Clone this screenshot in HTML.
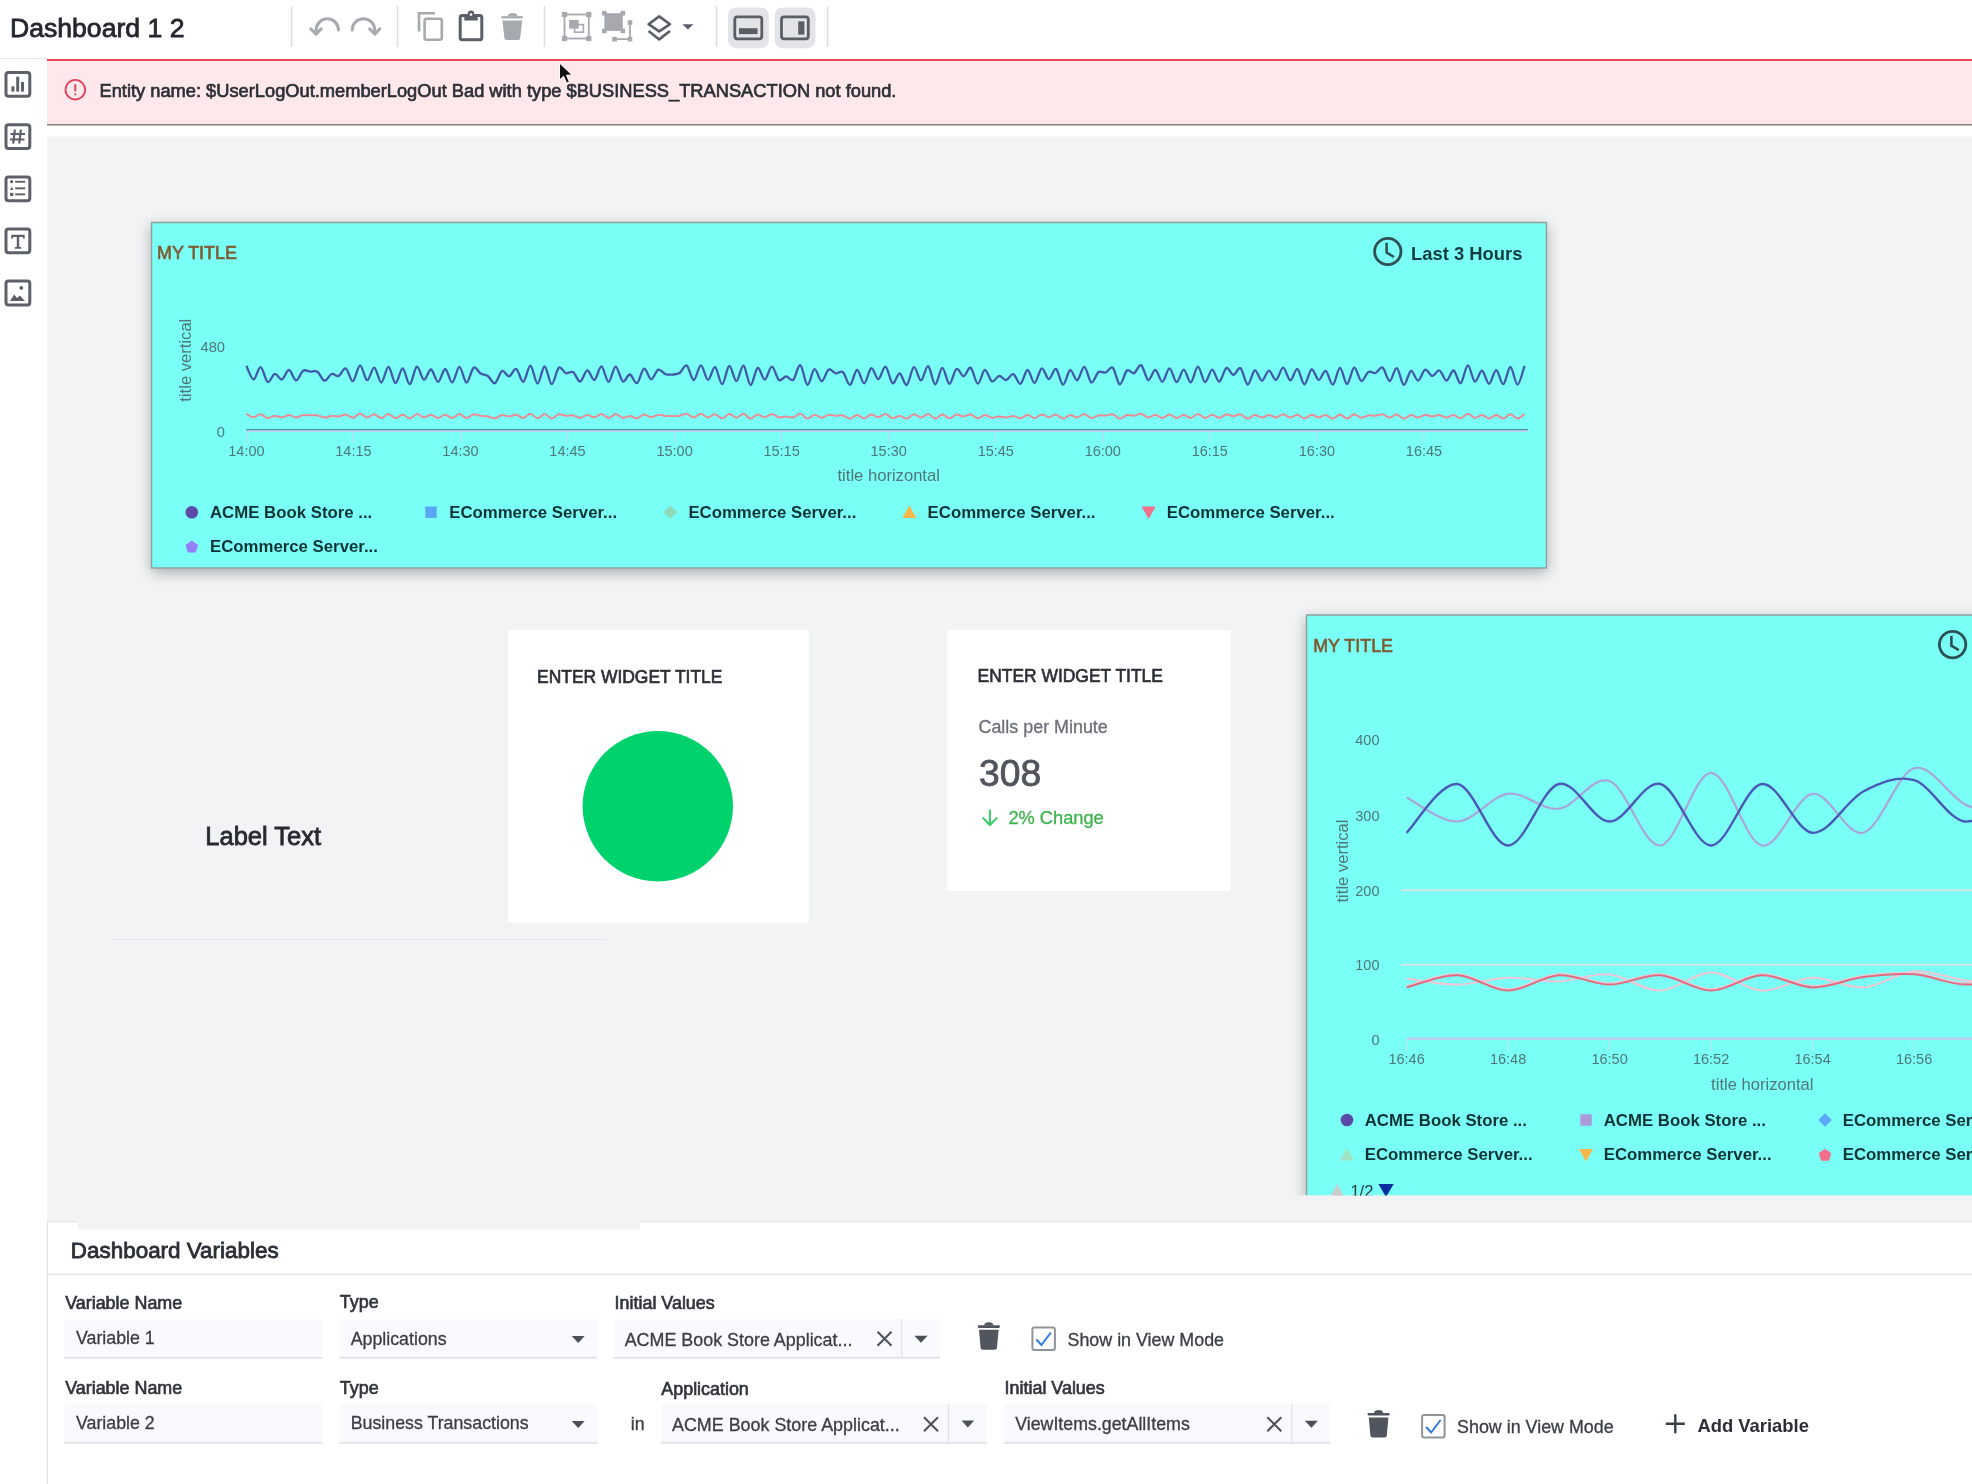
<!DOCTYPE html>
<html><head><meta charset="utf-8"><title>Dashboard</title>
<style>html,body{margin:0;padding:0;background:#fff;overflow:hidden;}svg{display:block;filter:blur(0.35px);}text{font-family:"Liberation Sans",sans-serif;white-space:pre;}</style>
</head><body>
<svg width="1972" height="1484" viewBox="0 0 1972 1484">
<defs><clipPath id="c2"><rect x="1280" y="590" width="700" height="605.6"/></clipPath><filter id="sh" x="-5%" y="-10%" width="110%" height="125%"><feGaussianBlur in="SourceAlpha" stdDeviation="7"/><feOffset dx="0" dy="4"/><feComponentTransfer><feFuncA type="linear" slope="0.3"/></feComponentTransfer><feMerge><feMergeNode/><feMergeNode in="SourceGraphic"/></feMerge></filter></defs>
<rect x="0" y="0" width="1972" height="1484" fill="#ffffff"/>
<rect x="47" y="136.5" width="1925" height="1085" fill="#f2f3f5"/>
<rect x="0" y="58" width="47" height="1" fill="#e6e7ea"/>
<rect x="47" y="59" width="1925" height="66" fill="#ffe8eb"/>
<rect x="47" y="59" width="1925" height="2" fill="#e8475c"/>
<rect x="47" y="124" width="1925" height="1.5" fill="#8c7c80"/>
<circle cx="75.3" cy="89.7" r="9.8" fill="none" stroke="#e2415a" stroke-width="1.8"/>
<rect x="74.3" y="84" width="2" height="7.5" rx="1" fill="#c94a5c"/>
<circle cx="75.3" cy="94.3" r="1.1" fill="#c94a5c"/>
<text x="99.5" y="96.6" font-size="18.28" fill="#2b2f36" stroke="#2b2f36" stroke-width="0.66" text-anchor="start" >Entity name: $UserLogOut.memberLogOut Bad with type $BUSINESS_TRANSACTION not found.</text>
<text x="10" y="37.3" font-size="26.6" fill="#24272e" stroke="#24272e" stroke-width="0.8" text-anchor="start" >Dashboard 1 2</text>
<rect x="290.85" y="6" width="1.5" height="41" fill="#dcdde0"/>
<rect x="396.75" y="6" width="1.5" height="41" fill="#dcdde0"/>
<rect x="543.65" y="6" width="1.5" height="41" fill="#dcdde0"/>
<rect x="715.75" y="6" width="1.5" height="41" fill="#dcdde0"/>
<rect x="826.85" y="6" width="1.5" height="41" fill="#dcdde0"/>
<path d="M338.5,30 A11.2,11.2 0 0 0 316.1,30 L316.1,33" fill="none" stroke="#a6a9ae" stroke-width="3" stroke-linecap="round"/>
<path d="M310.8,28.8 L316.1,34.2 L321.2,28.8" fill="none" stroke="#a6a9ae" stroke-width="3" stroke-linecap="round" stroke-linejoin="round"/>
<path d="M352.2,30 A11.2,11.2 0 0 1 374.8,30 L374.8,33" fill="none" stroke="#a6a9ae" stroke-width="3" stroke-linecap="round"/>
<path d="M369.6,28.8 L374.8,34.2 L379.8,28.8" fill="none" stroke="#a6a9ae" stroke-width="3" stroke-linecap="round" stroke-linejoin="round"/>
<path d="M419,31.5 L419,13.3 L435,13.3" fill="none" stroke="#a6a9ae" stroke-width="2.6"/>
<rect x="424.6" y="18.8" width="17.2" height="21" rx="2" fill="none" stroke="#a6a9ae" stroke-width="2.6"/>
<rect x="460.2" y="15.5" width="21.6" height="24.2" rx="2" fill="none" stroke="#5a5e66" stroke-width="3"/>
<rect x="464.3" y="14" width="13.4" height="6.5" fill="#5a5e66"/>
<circle cx="471" cy="13.6" r="3.2" fill="#5a5e66"/><circle cx="471" cy="14.6" r="1.3" fill="#fff"/>
<rect x="501.5" y="16.2" width="21.3" height="2.2" fill="#a6a9ae"/>
<path d="M507.8,16.5 Q507.8,13 512.6,13 Q517.4,13 517.4,16.5 Z" fill="#a6a9ae"/>
<path d="M502.4,20.5 L522.2,20.5 L520.2,38 Q520,40 518,40 L506.6,40 Q504.6,40 504.4,38 Z" fill="#a6a9ae"/>
<rect x="564.5" y="14.5" width="24.3" height="24" fill="none" stroke="#a6a9ae" stroke-width="1.8"/>
<rect x="561.9" y="11.9" width="5.2" height="5.2" fill="#a6a9ae"/>
<rect x="586.1999999999999" y="11.9" width="5.2" height="5.2" fill="#a6a9ae"/>
<rect x="561.9" y="35.9" width="5.2" height="5.2" fill="#a6a9ae"/>
<rect x="586.1999999999999" y="35.9" width="5.2" height="5.2" fill="#a6a9ae"/>
<rect x="574.6" y="24.6" width="8.8" height="7.6" fill="none" stroke="#a6a9ae" stroke-width="1.6"/>
<rect x="569.1" y="19.9" width="9.6" height="8.8" fill="#a6a9ae"/>
<rect x="604.4" y="13.2" width="18.4" height="17.7" fill="#a6a9ae"/>
<rect x="602.1" y="10.899999999999999" width="4.6" height="4.6" fill="#a6a9ae"/>
<rect x="620.5" y="10.899999999999999" width="4.6" height="4.6" fill="#a6a9ae"/>
<rect x="602.1" y="28.599999999999998" width="4.6" height="4.6" fill="#a6a9ae"/>
<rect x="620.5" y="28.599999999999998" width="4.6" height="4.6" fill="#a6a9ae"/>
<path d="M630,22.5 L630,39.2 L614.5,39.2" fill="none" stroke="#a6a9ae" stroke-width="1.8"/>
<rect x="627.7" y="20.2" width="4.6" height="4.6" fill="#a6a9ae"/>
<rect x="612.2" y="36.900000000000006" width="4.6" height="4.6" fill="#a6a9ae"/>
<rect x="627.7" y="36.900000000000006" width="4.6" height="4.6" fill="#a6a9ae"/>
<path d="M659.2,16.4 L670,24.2 L659.2,31.4 L648.6,24.2 Z" fill="none" stroke="#5a5e66" stroke-width="2.6" stroke-linejoin="round"/>
<path d="M648.6,31 L659.2,39.4 L670,31" fill="none" stroke="#5a5e66" stroke-width="2.6" stroke-linejoin="round"/>
<path d="M682.4,24.3 L693.4,24.3 L687.9,29.6 Z" fill="#5a5e66"/>
<rect x="728" y="7.4" width="40.8" height="40.8" rx="8" fill="#e3e4e7"/>
<rect x="774.7" y="7.4" width="40.8" height="40.8" rx="8" fill="#e3e4e7"/>
<rect x="734.8" y="16.8" width="27" height="22" rx="2.5" fill="none" stroke="#5a5e66" stroke-width="2.8"/>
<rect x="739" y="28.2" width="18.6" height="5.9" fill="#5a5e66"/>
<rect x="781.5" y="16.8" width="26.8" height="22" rx="2.5" fill="none" stroke="#5a5e66" stroke-width="2.8"/>
<rect x="798.2" y="21.3" width="6.2" height="13.3" fill="#5a5e66"/>
<rect x="6" y="72.5" width="23.8" height="23.8" rx="2.5" fill="none" stroke="#5c6068" stroke-width="3"/>
<rect x="6" y="124.7" width="23.8" height="23.8" rx="2.5" fill="none" stroke="#5c6068" stroke-width="3"/>
<rect x="6" y="176.9" width="23.8" height="23.8" rx="2.5" fill="none" stroke="#5c6068" stroke-width="3"/>
<rect x="6" y="229.0" width="23.8" height="23.8" rx="2.5" fill="none" stroke="#5c6068" stroke-width="3"/>
<rect x="6" y="281.1" width="23.8" height="23.8" rx="2.5" fill="none" stroke="#5c6068" stroke-width="3"/>
<rect x="11.4" y="86.3" width="3" height="5.3" fill="#5c6068"/><rect x="16.2" y="76.7" width="3" height="14.9" fill="#5c6068"/><rect x="21" y="81.9" width="3" height="9.7" fill="#5c6068"/>
<path d="M14.9,129.7 L13.2,143.7 M20.9,129.7 L19.2,143.7 M10.5,134.0 L25,134.0 M10,139.5 L24.5,139.5" stroke="#5c6068" stroke-width="2.2" fill="none"/>
<circle cx="11.6" cy="181.70000000000002" r="1.6" fill="#5c6068"/><path d="M10,190.0 L11.7,186.8 L13.4,190.0 Z" fill="#5c6068"/><rect x="10.1" y="192.9" width="3.2" height="3.2" fill="#5c6068"/>
<rect x="15.2" y="180.8" width="10" height="1.9" fill="#5c6068"/><rect x="15.2" y="187.4" width="10" height="1.9" fill="#5c6068"/><rect x="15.2" y="193.4" width="10" height="1.9" fill="#5c6068"/>
<path d="M11.3,234.8 L24.7,234.8 L24.7,238.7 L23.3,238.7 L22.8,236.9 L19.2,236.9 L19.2,246.8 L21.2,247.3 L21.2,248.7 L14.8,248.7 L14.8,247.3 L16.8,246.8 L16.8,236.9 L13.2,236.9 L12.7,238.7 L11.3,238.7 Z" fill="#5c6068"/>
<circle cx="21.3" cy="287.90000000000003" r="1.9" fill="#5c6068"/><path d="M10,300.90000000000003 L14.2,294.6 L17,298.1 L19.8,295.40000000000003 L25,300.90000000000003 Z" fill="#5c6068"/>
<path d="M559.5,63 L559.5,80 L563.6,76.3 L566.6,83.2 L569.4,82 L566.5,75.2 L572,75 Z" fill="#111" stroke="#fff" stroke-width="1"/>
<rect x="151.5" y="222.5" width="1395" height="345.5" fill="#79fff6" stroke="#8e9e9e" stroke-width="1.5" filter="url(#sh)"/>
<text x="157" y="259" font-size="17.9" fill="#7e5b32" stroke="#7e5b32" stroke-width="0.64" text-anchor="start" >MY TITLE</text>
<circle cx="1387.8" cy="251.5" r="13.2" fill="none" stroke="#2e5052" stroke-width="2.8"/>
<path d="M1386.6,242.8 L1386.6,252.6 L1394,257" fill="none" stroke="#2e5052" stroke-width="2.6"/>
<text x="1411" y="259.7" font-size="18.4" fill="#143b3d" font-weight="bold" text-anchor="start" >Last 3 Hours</text>
<text transform="translate(191.2,360.2) rotate(-90)" font-size="16.6" fill="#4e7777" text-anchor="middle">title vertical</text>
<text x="225" y="351.7" font-size="14.7" fill="#4e7777" font-weight="normal" text-anchor="end" >480</text>
<text x="225" y="437" font-size="14.7" fill="#4e7777" font-weight="normal" text-anchor="end" >0</text>
<rect x="245.9" y="430" width="1" height="13" fill="#c6d2f2"/>
<text x="246.4" y="456.2" font-size="14.5" fill="#4e7777" font-weight="normal" text-anchor="middle" >14:00</text>
<rect x="352.95" y="430" width="1" height="13" fill="#c6d2f2"/>
<text x="353.4" y="456.2" font-size="14.5" fill="#4e7777" font-weight="normal" text-anchor="middle" >14:15</text>
<rect x="460.0" y="430" width="1" height="13" fill="#c6d2f2"/>
<text x="460.5" y="456.2" font-size="14.5" fill="#4e7777" font-weight="normal" text-anchor="middle" >14:30</text>
<rect x="567.05" y="430" width="1" height="13" fill="#c6d2f2"/>
<text x="567.5" y="456.2" font-size="14.5" fill="#4e7777" font-weight="normal" text-anchor="middle" >14:45</text>
<rect x="674.1" y="430" width="1" height="13" fill="#c6d2f2"/>
<text x="674.6" y="456.2" font-size="14.5" fill="#4e7777" font-weight="normal" text-anchor="middle" >15:00</text>
<rect x="781.15" y="430" width="1" height="13" fill="#c6d2f2"/>
<text x="781.6" y="456.2" font-size="14.5" fill="#4e7777" font-weight="normal" text-anchor="middle" >15:15</text>
<rect x="888.1999999999999" y="430" width="1" height="13" fill="#c6d2f2"/>
<text x="888.7" y="456.2" font-size="14.5" fill="#4e7777" font-weight="normal" text-anchor="middle" >15:30</text>
<rect x="995.25" y="430" width="1" height="13" fill="#c6d2f2"/>
<text x="995.8" y="456.2" font-size="14.5" fill="#4e7777" font-weight="normal" text-anchor="middle" >15:45</text>
<rect x="1102.3" y="430" width="1" height="13" fill="#c6d2f2"/>
<text x="1102.8" y="456.2" font-size="14.5" fill="#4e7777" font-weight="normal" text-anchor="middle" >16:00</text>
<rect x="1209.35" y="430" width="1" height="13" fill="#c6d2f2"/>
<text x="1209.8" y="456.2" font-size="14.5" fill="#4e7777" font-weight="normal" text-anchor="middle" >16:15</text>
<rect x="1316.4" y="430" width="1" height="13" fill="#c6d2f2"/>
<text x="1316.9" y="456.2" font-size="14.5" fill="#4e7777" font-weight="normal" text-anchor="middle" >16:30</text>
<rect x="1423.45" y="430" width="1" height="13" fill="#c6d2f2"/>
<text x="1424.0" y="456.2" font-size="14.5" fill="#4e7777" font-weight="normal" text-anchor="middle" >16:45</text>
<rect x="246" y="430" width="1282" height="2" fill="#c6d2f2"/>
<rect x="246" y="429" width="1282" height="1.3" fill="#3f9b9e"/>
<text x="888.7" y="480.6" font-size="16.6" fill="#4e7777" font-weight="normal" text-anchor="middle" >title horizontal</text>
<path d="M246.4,413.7 C247.6,414.2 251.1,417.1 253.5,417.1 C255.9,417.2 258.2,413.9 260.6,414.0 C263.0,414.1 265.3,417.5 267.7,417.8 C270.1,418.1 272.4,415.8 274.8,415.7 C277.2,415.6 279.5,417.3 281.9,417.1 C284.3,417.0 286.6,414.7 289.0,414.7 C291.4,414.7 293.7,417.3 296.1,417.3 C298.5,417.4 300.8,415.2 303.2,414.9 C305.6,414.5 307.9,415.1 310.3,415.1 C312.7,415.2 315.0,414.7 317.4,415.1 C319.8,415.5 322.1,417.3 324.5,417.4 C326.9,417.5 329.2,415.9 331.6,415.7 C334.0,415.5 336.3,416.4 338.7,416.2 C341.1,416.0 343.4,414.1 345.8,414.3 C348.2,414.5 350.5,417.7 352.9,417.6 C355.3,417.4 357.7,413.6 360.0,413.5 C362.4,413.5 364.8,417.2 367.1,417.3 C369.5,417.4 371.9,414.0 374.2,414.1 C376.6,414.2 379.0,417.9 381.3,417.9 C383.7,417.9 386.1,413.9 388.4,413.9 C390.8,413.9 393.2,418.0 395.5,418.1 C397.9,418.1 400.3,414.3 402.6,414.3 C405.0,414.3 407.4,418.4 409.7,418.3 C412.1,418.3 414.5,414.1 416.8,413.9 C419.2,413.7 421.6,417.1 423.9,417.2 C426.3,417.3 428.7,414.5 431.0,414.6 C433.4,414.7 435.8,417.8 438.1,417.7 C440.5,417.7 442.9,414.4 445.2,414.4 C447.6,414.5 450.0,418.0 452.3,417.9 C454.7,417.8 457.1,413.9 459.4,413.9 C461.8,413.9 464.2,417.9 466.5,417.9 C468.9,417.9 471.3,414.5 473.6,414.1 C476.0,413.7 478.4,415.2 480.7,415.6 C483.1,415.9 485.5,415.8 487.8,416.2 C490.2,416.6 492.6,418.3 494.9,418.1 C497.3,417.9 499.7,415.2 502.0,414.9 C504.4,414.7 506.8,416.4 509.1,416.3 C511.5,416.2 513.9,414.2 516.2,414.4 C518.6,414.7 521.0,417.8 523.3,417.7 C525.7,417.6 528.1,413.5 530.4,413.6 C532.8,413.7 535.2,418.1 537.5,418.2 C539.9,418.2 542.3,413.8 544.6,413.8 C547.0,413.8 549.4,418.3 551.7,418.3 C554.1,418.4 556.5,414.6 558.8,414.1 C561.2,413.6 563.6,415.3 565.9,415.5 C568.3,415.7 570.7,414.9 573.1,415.2 C575.4,415.6 577.8,417.7 580.2,417.6 C582.5,417.6 584.9,414.8 587.3,414.8 C589.6,414.7 592.0,417.4 594.4,417.2 C596.7,417.1 599.1,413.7 601.5,413.8 C603.8,413.9 606.2,417.7 608.6,417.7 C610.9,417.7 613.3,413.8 615.7,413.8 C618.0,413.8 620.4,417.3 622.8,417.6 C625.1,418.0 627.5,415.8 629.9,415.9 C632.2,415.9 634.6,418.3 637.0,418.1 C639.3,417.8 641.7,414.5 644.1,414.4 C646.4,414.2 648.8,417.0 651.2,417.1 C653.5,417.1 655.9,414.8 658.3,414.6 C660.6,414.4 663.0,415.5 665.4,415.7 C667.7,415.9 670.1,415.9 672.5,415.9 C674.8,415.8 677.2,415.9 679.6,415.5 C681.9,415.1 684.3,413.2 686.7,413.5 C689.0,413.8 691.4,417.2 693.8,417.2 C696.1,417.2 698.5,413.5 700.9,413.5 C703.2,413.5 705.6,417.1 708.0,417.2 C710.3,417.3 712.7,413.8 715.1,414.0 C717.4,414.2 719.8,418.4 722.2,418.3 C724.5,418.3 726.9,413.8 729.3,413.7 C731.6,413.5 734.0,417.5 736.4,417.5 C738.7,417.5 741.1,413.4 743.5,413.6 C745.8,413.8 748.2,418.4 750.6,418.5 C752.9,418.6 755.3,414.4 757.7,414.2 C760.0,413.9 762.4,417.2 764.8,417.2 C767.1,417.1 769.5,413.8 771.9,413.8 C774.2,413.8 776.6,416.8 779.0,417.2 C781.4,417.7 783.7,416.3 786.1,416.3 C788.5,416.3 790.8,417.7 793.2,417.2 C795.6,416.7 797.9,413.3 800.3,413.5 C802.7,413.7 805.0,418.3 807.4,418.5 C809.8,418.7 812.1,414.6 814.5,414.5 C816.9,414.3 819.2,417.5 821.6,417.6 C824.0,417.6 826.3,414.9 828.7,414.6 C831.1,414.3 833.4,415.5 835.8,415.6 C838.2,415.7 840.5,414.7 842.9,415.2 C845.3,415.7 847.6,418.6 850.0,418.5 C852.4,418.4 854.7,414.7 857.1,414.7 C859.5,414.6 861.8,418.2 864.2,418.1 C866.6,418.1 868.9,414.4 871.3,414.2 C873.7,414.0 876.0,417.1 878.4,417.0 C880.8,417.0 883.1,413.7 885.5,413.9 C887.9,414.0 890.2,417.8 892.6,418.1 C895.0,418.3 897.3,415.5 899.7,415.6 C902.1,415.7 904.4,418.8 906.8,418.5 C909.2,418.2 911.5,414.2 913.9,414.0 C916.3,413.8 918.6,417.4 921.0,417.3 C923.4,417.3 925.7,413.6 928.1,413.7 C930.5,413.9 932.8,418.3 935.2,418.4 C937.6,418.4 939.9,414.2 942.3,414.2 C944.7,414.1 947.0,418.2 949.4,418.2 C951.8,418.3 954.1,414.8 956.5,414.4 C958.9,414.1 961.2,416.3 963.6,416.3 C966.0,416.2 968.3,413.8 970.7,414.2 C973.1,414.5 975.4,418.1 977.8,418.2 C980.2,418.3 982.5,414.8 984.9,414.7 C987.3,414.5 989.6,417.3 992.0,417.6 C994.4,417.9 996.8,416.3 999.1,416.2 C1001.5,416.2 1003.9,417.3 1006.2,417.3 C1008.6,417.2 1011.0,415.6 1013.3,415.7 C1015.7,415.9 1018.1,418.4 1020.4,418.2 C1022.8,418.1 1025.2,414.7 1027.5,414.7 C1029.9,414.7 1032.3,418.1 1034.6,418.0 C1037.0,417.9 1039.4,414.4 1041.7,414.3 C1044.1,414.1 1046.5,417.0 1048.8,417.0 C1051.2,417.0 1053.6,414.2 1055.9,414.4 C1058.3,414.7 1060.7,418.4 1063.0,418.4 C1065.4,418.5 1067.8,414.9 1070.1,414.8 C1072.5,414.6 1074.9,417.5 1077.2,417.3 C1079.6,417.2 1082.0,413.8 1084.3,413.9 C1086.7,414.0 1089.1,417.7 1091.4,417.9 C1093.8,418.1 1096.2,415.6 1098.5,415.2 C1100.9,414.8 1103.3,415.5 1105.6,415.3 C1108.0,415.2 1110.4,413.6 1112.7,414.1 C1115.1,414.6 1117.5,418.3 1119.8,418.4 C1122.2,418.5 1124.6,415.3 1126.9,414.8 C1129.3,414.4 1131.7,415.8 1134.0,415.5 C1136.4,415.3 1138.8,413.2 1141.1,413.5 C1143.5,413.7 1145.9,417.1 1148.2,417.3 C1150.6,417.5 1153.0,414.6 1155.3,414.6 C1157.7,414.7 1160.1,417.8 1162.4,417.7 C1164.8,417.7 1167.2,414.3 1169.5,414.3 C1171.9,414.3 1174.3,417.7 1176.6,417.8 C1179.0,417.8 1181.4,414.6 1183.7,414.6 C1186.1,414.6 1188.5,418.0 1190.8,417.9 C1193.2,417.7 1195.6,413.9 1197.9,413.8 C1200.3,413.8 1202.7,417.6 1205.0,417.8 C1207.4,417.9 1209.8,414.6 1212.2,414.6 C1214.5,414.6 1216.9,417.7 1219.3,417.7 C1221.6,417.6 1224.0,414.5 1226.4,414.2 C1228.7,413.9 1231.1,415.9 1233.5,415.9 C1235.8,415.9 1238.2,413.8 1240.6,414.2 C1242.9,414.7 1245.3,418.3 1247.7,418.4 C1250.0,418.5 1252.4,414.9 1254.8,414.8 C1257.1,414.6 1259.5,417.4 1261.9,417.4 C1264.2,417.4 1266.6,414.9 1269.0,414.9 C1271.3,414.8 1273.7,417.3 1276.1,417.2 C1278.4,417.1 1280.8,414.1 1283.2,414.1 C1285.5,414.1 1287.9,417.3 1290.3,417.4 C1292.6,417.4 1295.0,414.3 1297.4,414.4 C1299.7,414.6 1302.1,418.4 1304.5,418.4 C1306.8,418.4 1309.2,414.7 1311.6,414.5 C1313.9,414.3 1316.3,417.1 1318.7,417.2 C1321.0,417.3 1323.4,414.7 1325.8,414.9 C1328.1,415.1 1330.5,418.6 1332.9,418.5 C1335.2,418.3 1337.6,414.2 1340.0,414.2 C1342.3,414.1 1344.7,418.3 1347.1,418.3 C1349.4,418.3 1351.8,414.2 1354.2,414.1 C1356.5,414.0 1358.9,417.3 1361.3,417.5 C1363.6,417.7 1366.0,415.5 1368.4,415.2 C1370.7,414.8 1373.1,415.6 1375.5,415.5 C1377.8,415.3 1380.2,413.8 1382.6,414.1 C1384.9,414.4 1387.3,417.5 1389.7,417.5 C1392.0,417.5 1394.4,414.0 1396.8,414.2 C1399.1,414.4 1401.5,418.4 1403.9,418.5 C1406.2,418.6 1408.6,415.1 1411.0,414.9 C1413.3,414.7 1415.7,417.5 1418.1,417.4 C1420.5,417.4 1422.8,414.8 1425.2,414.6 C1427.6,414.4 1429.9,416.2 1432.3,416.2 C1434.7,416.3 1437.0,414.6 1439.4,414.8 C1441.8,415.0 1444.1,417.4 1446.5,417.4 C1448.9,417.4 1451.2,414.7 1453.6,414.8 C1456.0,414.9 1458.3,418.3 1460.7,418.1 C1463.1,417.8 1465.4,413.6 1467.8,413.5 C1470.2,413.4 1472.5,417.4 1474.9,417.6 C1477.3,417.9 1479.6,414.8 1482.0,414.9 C1484.4,415.0 1486.7,418.2 1489.1,418.2 C1491.5,418.2 1493.8,414.7 1496.2,414.7 C1498.6,414.8 1500.9,418.4 1503.3,418.3 C1505.7,418.2 1508.0,413.9 1510.4,413.9 C1512.8,414.0 1515.1,418.5 1517.5,418.4 C1519.9,418.4 1523.4,414.4 1524.6,413.6" fill="none" stroke="#b9a48a" stroke-width="1.6" opacity="0.7"/>
<path d="M246.4,414.0 C247.6,414.5 251.1,417.3 253.5,417.4 C255.9,417.4 258.2,414.2 260.6,414.3 C263.0,414.4 265.3,417.7 267.7,418.0 C270.1,418.3 272.4,416.1 274.8,416.0 C277.2,415.8 279.5,417.5 281.9,417.4 C284.3,417.2 286.6,415.0 289.0,415.0 C291.4,415.0 293.7,417.6 296.1,417.6 C298.5,417.6 300.8,415.5 303.2,415.2 C305.6,414.8 307.9,415.4 310.3,415.4 C312.7,415.4 315.0,415.0 317.4,415.4 C319.8,415.8 322.1,417.6 324.5,417.7 C326.9,417.8 329.2,416.2 331.6,416.0 C334.0,415.8 336.3,416.7 338.7,416.5 C341.1,416.3 343.4,414.4 345.8,414.6 C348.2,414.8 350.5,417.9 352.9,417.8 C355.3,417.7 357.7,413.9 360.0,413.8 C362.4,413.8 364.8,417.5 367.1,417.6 C369.5,417.7 371.9,414.3 374.2,414.4 C376.6,414.5 379.0,418.2 381.3,418.1 C383.7,418.1 386.1,414.2 388.4,414.2 C390.8,414.2 393.2,418.2 395.5,418.3 C397.9,418.4 400.3,414.6 402.6,414.6 C405.0,414.7 407.4,418.6 409.7,418.6 C412.1,418.5 414.5,414.4 416.8,414.2 C419.2,414.0 421.6,417.3 423.9,417.4 C426.3,417.5 428.7,414.8 431.0,414.9 C433.4,415.0 435.8,418.0 438.1,418.0 C440.5,418.0 442.9,414.7 445.2,414.8 C447.6,414.8 450.0,418.2 452.3,418.1 C454.7,418.0 457.1,414.2 459.4,414.2 C461.8,414.2 464.2,418.1 466.5,418.1 C468.9,418.2 471.3,414.8 473.6,414.4 C476.0,414.1 478.4,415.5 480.7,415.9 C483.1,416.2 485.5,416.1 487.8,416.5 C490.2,416.9 492.6,418.5 494.9,418.3 C497.3,418.1 499.7,415.5 502.0,415.2 C504.4,415.0 506.8,416.7 509.1,416.6 C511.5,416.5 513.9,414.5 516.2,414.8 C518.6,415.0 521.0,418.1 523.3,417.9 C525.7,417.8 528.1,413.8 530.4,413.9 C532.8,414.0 535.2,418.4 537.5,418.4 C539.9,418.4 542.3,414.1 544.6,414.1 C547.0,414.1 549.4,418.5 551.7,418.6 C554.1,418.6 556.5,414.9 558.8,414.4 C561.2,414.0 563.6,415.6 565.9,415.8 C568.3,416.0 570.7,415.2 573.1,415.5 C575.4,415.9 577.8,417.9 580.2,417.9 C582.5,417.8 584.9,415.1 587.3,415.1 C589.6,415.0 592.0,417.6 594.4,417.5 C596.7,417.3 599.1,414.0 601.5,414.1 C603.8,414.2 606.2,418.0 608.6,418.0 C610.9,418.0 613.3,414.2 615.7,414.1 C618.0,414.1 620.4,417.5 622.8,417.9 C625.1,418.2 627.5,416.1 629.9,416.1 C632.2,416.2 634.6,418.5 637.0,418.3 C639.3,418.0 641.7,414.8 644.1,414.7 C646.4,414.5 648.8,417.3 651.2,417.3 C653.5,417.4 655.9,415.1 658.3,414.9 C660.6,414.7 663.0,415.8 665.4,416.0 C667.7,416.2 670.1,416.2 672.5,416.1 C674.8,416.1 677.2,416.2 679.6,415.8 C681.9,415.4 684.3,413.6 686.7,413.9 C689.0,414.1 691.4,417.5 693.8,417.5 C696.1,417.5 698.5,413.8 700.9,413.8 C703.2,413.8 705.6,417.4 708.0,417.5 C710.3,417.6 712.7,414.1 715.1,414.3 C717.4,414.5 719.8,418.6 722.2,418.6 C724.5,418.5 726.9,414.1 729.3,414.0 C731.6,413.8 734.0,417.8 736.4,417.8 C738.7,417.8 741.1,413.8 743.5,413.9 C745.8,414.1 748.2,418.6 750.6,418.7 C752.9,418.8 755.3,414.7 757.7,414.5 C760.0,414.3 762.4,417.5 764.8,417.4 C767.1,417.3 769.5,414.1 771.9,414.1 C774.2,414.2 776.6,417.1 779.0,417.5 C781.4,417.9 783.7,416.6 786.1,416.6 C788.5,416.6 790.8,417.9 793.2,417.5 C795.6,417.0 797.9,413.6 800.3,413.8 C802.7,414.0 805.0,418.6 807.4,418.7 C809.8,418.9 812.1,414.9 814.5,414.8 C816.9,414.6 819.2,417.8 821.6,417.8 C824.0,417.8 826.3,415.2 828.7,414.9 C831.1,414.6 833.4,415.7 835.8,415.8 C838.2,415.9 840.5,415.0 842.9,415.5 C845.3,416.0 847.6,418.8 850.0,418.7 C852.4,418.6 854.7,415.0 857.1,415.0 C859.5,414.9 861.8,418.4 864.2,418.4 C866.6,418.3 868.9,414.7 871.3,414.5 C873.7,414.3 876.0,417.4 878.4,417.3 C880.8,417.2 883.1,414.0 885.5,414.2 C887.9,414.3 890.2,418.0 892.6,418.3 C895.0,418.6 897.3,415.8 899.7,415.9 C902.1,416.0 904.4,419.0 906.8,418.7 C909.2,418.5 911.5,414.5 913.9,414.3 C916.3,414.1 918.6,417.6 921.0,417.6 C923.4,417.6 925.7,413.9 928.1,414.1 C930.5,414.2 932.8,418.5 935.2,418.6 C937.6,418.7 939.9,414.5 942.3,414.5 C944.7,414.4 947.0,418.4 949.4,418.4 C951.8,418.5 954.1,415.1 956.5,414.7 C958.9,414.4 961.2,416.6 963.6,416.5 C966.0,416.5 968.3,414.2 970.7,414.5 C973.1,414.8 975.4,418.4 977.8,418.4 C980.2,418.5 982.5,415.0 984.9,415.0 C987.3,414.9 989.6,417.6 992.0,417.8 C994.4,418.1 996.8,416.5 999.1,416.5 C1001.5,416.4 1003.9,417.6 1006.2,417.5 C1008.6,417.4 1011.0,415.9 1013.3,416.0 C1015.7,416.2 1018.1,418.6 1020.4,418.5 C1022.8,418.3 1025.2,415.0 1027.5,415.0 C1029.9,415.0 1032.3,418.3 1034.6,418.2 C1037.0,418.2 1039.4,414.7 1041.7,414.6 C1044.1,414.4 1046.5,417.2 1048.8,417.3 C1051.2,417.3 1053.6,414.5 1055.9,414.7 C1058.3,415.0 1060.7,418.6 1063.0,418.7 C1065.4,418.7 1067.8,415.2 1070.1,415.1 C1072.5,414.9 1074.9,417.7 1077.2,417.6 C1079.6,417.4 1082.0,414.1 1084.3,414.2 C1086.7,414.3 1089.1,417.9 1091.4,418.1 C1093.8,418.3 1096.2,415.9 1098.5,415.5 C1100.9,415.1 1103.3,415.8 1105.6,415.6 C1108.0,415.5 1110.4,413.9 1112.7,414.4 C1115.1,414.9 1117.5,418.5 1119.8,418.6 C1122.2,418.7 1124.6,415.6 1126.9,415.1 C1129.3,414.7 1131.7,416.0 1134.0,415.8 C1136.4,415.6 1138.8,413.5 1141.1,413.8 C1143.5,414.1 1145.9,417.3 1148.2,417.5 C1150.6,417.7 1153.0,414.9 1155.3,414.9 C1157.7,415.0 1160.1,418.0 1162.4,418.0 C1164.8,417.9 1167.2,414.6 1169.5,414.6 C1171.9,414.6 1174.3,418.0 1176.6,418.0 C1179.0,418.1 1181.4,414.9 1183.7,414.9 C1186.1,414.9 1188.5,418.2 1190.8,418.1 C1193.2,418.0 1195.6,414.2 1197.9,414.2 C1200.3,414.2 1202.7,417.9 1205.0,418.0 C1207.4,418.1 1209.8,414.9 1212.2,414.9 C1214.5,414.9 1216.9,418.0 1219.3,417.9 C1221.6,417.9 1224.0,414.8 1226.4,414.5 C1228.7,414.2 1231.1,416.2 1233.5,416.2 C1235.8,416.2 1238.2,414.1 1240.6,414.5 C1242.9,415.0 1245.3,418.6 1247.7,418.7 C1250.0,418.7 1252.4,415.2 1254.8,415.1 C1257.1,414.9 1259.5,417.6 1261.9,417.6 C1264.2,417.7 1266.6,415.2 1269.0,415.2 C1271.3,415.1 1273.7,417.6 1276.1,417.5 C1278.4,417.3 1280.8,414.4 1283.2,414.4 C1285.5,414.4 1287.9,417.6 1290.3,417.6 C1292.6,417.7 1295.0,414.6 1297.4,414.8 C1299.7,414.9 1302.1,418.6 1304.5,418.6 C1306.8,418.6 1309.2,415.0 1311.6,414.8 C1313.9,414.6 1316.3,417.4 1318.7,417.5 C1321.0,417.5 1323.4,415.0 1325.8,415.2 C1328.1,415.4 1330.5,418.8 1332.9,418.7 C1335.2,418.6 1337.6,414.5 1340.0,414.5 C1342.3,414.5 1344.7,418.5 1347.1,418.5 C1349.4,418.5 1351.8,414.5 1354.2,414.4 C1356.5,414.3 1358.9,417.6 1361.3,417.8 C1363.6,417.9 1366.0,415.8 1368.4,415.5 C1370.7,415.1 1373.1,415.9 1375.5,415.8 C1377.8,415.6 1380.2,414.1 1382.6,414.4 C1384.9,414.7 1387.3,417.7 1389.7,417.7 C1392.0,417.8 1394.4,414.4 1396.8,414.5 C1399.1,414.7 1401.5,418.6 1403.9,418.7 C1406.2,418.8 1408.6,415.4 1411.0,415.2 C1413.3,415.0 1415.7,417.7 1418.1,417.6 C1420.5,417.6 1422.8,415.1 1425.2,414.9 C1427.6,414.7 1429.9,416.5 1432.3,416.5 C1434.7,416.5 1437.0,414.9 1439.4,415.1 C1441.8,415.3 1444.1,417.6 1446.5,417.6 C1448.9,417.6 1451.2,415.0 1453.6,415.1 C1456.0,415.2 1458.3,418.5 1460.7,418.3 C1463.1,418.1 1465.4,413.9 1467.8,413.8 C1470.2,413.8 1472.5,417.7 1474.9,417.9 C1477.3,418.1 1479.6,415.1 1482.0,415.2 C1484.4,415.3 1486.7,418.5 1489.1,418.5 C1491.5,418.4 1493.8,415.0 1496.2,415.0 C1498.6,415.0 1500.9,418.7 1503.3,418.5 C1505.7,418.4 1508.0,414.2 1510.4,414.3 C1512.8,414.3 1515.1,418.7 1517.5,418.6 C1519.9,418.6 1523.4,414.7 1524.6,413.9" fill="none" stroke="#f08a98" stroke-width="1.8"/>
<path d="M246.4,365.9 C247.6,368.2 251.1,379.2 253.5,379.4 C255.9,379.6 258.2,366.8 260.6,367.2 C263.0,367.6 265.3,380.9 267.7,382.0 C270.1,383.1 272.4,374.2 274.8,373.8 C277.2,373.4 279.5,380.2 281.9,379.5 C284.3,378.9 286.6,369.8 289.0,370.0 C291.4,370.1 293.7,380.2 296.1,380.3 C298.5,380.5 300.8,372.1 303.2,370.7 C305.6,369.2 307.9,371.4 310.3,371.6 C312.7,371.8 315.0,370.2 317.4,371.7 C319.8,373.2 322.1,380.4 324.5,380.7 C326.9,381.1 329.2,374.8 331.6,374.0 C334.0,373.2 336.3,376.9 338.7,375.9 C341.1,375.0 343.4,367.6 345.8,368.5 C348.2,369.4 350.5,381.8 352.9,381.2 C355.3,380.7 357.7,365.5 360.0,365.4 C362.4,365.2 364.8,379.9 367.1,380.2 C369.5,380.6 371.9,367.2 374.2,367.6 C376.6,367.9 379.0,382.6 381.3,382.5 C383.7,382.4 386.1,366.7 388.4,366.8 C390.8,366.9 393.2,382.9 395.5,383.2 C397.9,383.5 400.3,368.3 402.6,368.4 C405.0,368.6 407.4,384.5 409.7,384.3 C412.1,384.0 414.5,367.5 416.8,366.7 C419.2,366.0 421.6,379.2 423.9,379.7 C426.3,380.2 428.7,369.2 431.0,369.5 C433.4,369.9 435.8,382.0 438.1,381.9 C440.5,381.8 442.9,368.9 445.2,369.0 C447.6,369.1 450.0,382.8 452.3,382.4 C454.7,382.1 457.1,366.9 459.4,366.9 C461.8,366.9 464.2,382.4 466.5,382.6 C468.9,382.7 471.3,369.2 473.6,367.7 C476.0,366.2 478.4,372.1 480.7,373.5 C483.1,374.9 485.5,374.3 487.8,376.0 C490.2,377.6 492.6,384.0 494.9,383.2 C497.3,382.4 499.7,372.1 502.0,371.0 C504.4,369.8 506.8,376.7 509.1,376.4 C511.5,376.0 513.9,368.1 516.2,369.0 C518.6,369.9 521.0,382.3 523.3,381.8 C525.7,381.2 528.1,365.4 530.4,365.7 C532.8,366.0 535.2,383.5 537.5,383.6 C539.9,383.7 542.3,366.4 544.6,366.5 C547.0,366.6 549.4,384.0 551.7,384.2 C554.1,384.4 556.5,369.5 558.8,367.7 C561.2,365.9 563.6,372.4 565.9,373.2 C568.3,373.9 570.7,370.7 573.1,372.1 C575.4,373.5 577.8,381.8 580.2,381.5 C582.5,381.2 584.9,370.6 587.3,370.3 C589.6,370.0 592.0,380.6 594.4,379.9 C596.7,379.3 599.1,366.1 601.5,366.4 C603.8,366.7 606.2,381.9 608.6,381.9 C610.9,381.9 613.3,366.6 615.7,366.6 C618.0,366.5 620.4,380.2 622.8,381.5 C625.1,382.8 627.5,374.3 629.9,374.5 C632.2,374.8 634.6,384.1 637.0,383.1 C639.3,382.2 641.7,369.3 644.1,368.7 C646.4,368.1 648.8,379.2 651.2,379.3 C653.5,379.5 655.9,370.6 658.3,369.7 C660.6,368.8 663.0,373.2 665.4,374.1 C667.7,374.9 670.1,374.8 672.5,374.6 C674.8,374.4 677.2,374.6 679.6,373.1 C681.9,371.6 684.3,364.3 686.7,365.4 C689.0,366.6 691.4,380.0 693.8,380.0 C696.1,380.0 698.5,365.3 700.9,365.3 C703.2,365.3 705.6,379.6 708.0,379.9 C710.3,380.2 712.7,366.5 715.1,367.2 C717.4,367.9 719.8,384.5 722.2,384.2 C724.5,384.0 726.9,366.4 729.3,365.9 C731.6,365.4 734.0,381.1 736.4,381.1 C738.7,381.1 741.1,365.1 743.5,365.7 C745.8,366.4 748.2,384.6 750.6,385.0 C752.9,385.3 755.3,368.8 757.7,367.9 C760.0,367.0 762.4,379.8 764.8,379.6 C767.1,379.4 769.5,366.5 771.9,366.6 C774.2,366.6 776.6,378.3 779.0,380.0 C781.4,381.6 783.7,376.4 786.1,376.3 C788.5,376.3 790.8,381.7 793.2,379.9 C795.6,378.0 797.9,364.3 800.3,365.2 C802.7,366.0 805.0,384.2 807.4,384.9 C809.8,385.5 812.1,369.8 814.5,369.2 C816.9,368.6 819.2,381.1 821.6,381.2 C824.0,381.3 826.3,370.9 828.7,369.6 C831.1,368.3 833.4,373.0 835.8,373.4 C838.2,373.8 840.5,370.1 842.9,372.0 C845.3,373.9 847.6,385.3 850.0,384.9 C852.4,384.5 854.7,370.1 857.1,369.8 C859.5,369.6 861.8,383.7 864.2,383.4 C866.6,383.2 868.9,368.8 871.3,368.1 C873.7,367.4 876.0,379.4 878.4,379.2 C880.8,378.9 883.1,366.0 885.5,366.7 C887.9,367.3 890.2,382.0 892.6,383.2 C895.0,384.3 897.3,373.2 899.7,373.5 C902.1,373.8 904.4,386.0 906.8,384.9 C909.2,383.9 911.5,367.9 913.9,367.2 C916.3,366.4 918.6,380.5 921.0,380.4 C923.4,380.2 925.7,365.6 928.1,366.2 C930.5,366.9 932.8,384.1 935.2,384.4 C937.6,384.7 939.9,368.0 942.3,367.9 C944.7,367.8 947.0,383.6 949.4,383.8 C951.8,384.0 954.1,370.2 956.5,369.0 C958.9,367.7 961.2,376.4 963.6,376.2 C966.0,376.0 968.3,366.6 970.7,367.9 C973.1,369.1 975.4,383.4 977.8,383.7 C980.2,384.1 982.5,370.2 984.9,369.8 C987.3,369.4 989.6,380.4 992.0,381.4 C994.4,382.4 996.8,376.2 999.1,375.9 C1001.5,375.7 1003.9,380.3 1006.2,380.0 C1008.6,379.7 1011.0,373.4 1013.3,374.1 C1015.7,374.7 1018.1,384.5 1020.4,383.8 C1022.8,383.2 1025.2,370.1 1027.5,370.0 C1029.9,369.8 1032.3,383.2 1034.6,382.9 C1037.0,382.7 1039.4,368.9 1041.7,368.3 C1044.1,367.6 1046.5,379.0 1048.8,379.1 C1051.2,379.2 1053.6,368.0 1055.9,368.9 C1058.3,369.8 1060.7,384.4 1063.0,384.6 C1065.4,384.8 1067.8,371.0 1070.1,370.2 C1072.5,369.5 1074.9,380.8 1077.2,380.3 C1079.6,379.7 1082.0,366.4 1084.3,366.8 C1086.7,367.1 1089.1,381.6 1091.4,382.5 C1093.8,383.4 1096.2,373.7 1098.5,372.0 C1100.9,370.4 1103.3,373.2 1105.6,372.5 C1108.0,371.8 1110.4,365.8 1112.7,367.7 C1115.1,369.7 1117.5,384.0 1119.8,384.4 C1122.2,384.9 1124.6,372.4 1126.9,370.5 C1129.3,368.6 1131.7,374.1 1134.0,373.2 C1136.4,372.3 1138.8,364.0 1141.1,365.1 C1143.5,366.3 1145.9,379.3 1148.2,380.1 C1150.6,380.9 1153.0,369.5 1155.3,369.8 C1157.7,370.1 1160.1,382.1 1162.4,381.8 C1164.8,381.6 1167.2,368.3 1169.5,368.3 C1171.9,368.4 1174.3,381.9 1176.6,382.1 C1179.0,382.3 1181.4,369.7 1183.7,369.7 C1186.1,369.7 1188.5,382.9 1190.8,382.4 C1193.2,381.9 1195.6,366.7 1197.9,366.7 C1200.3,366.6 1202.7,381.6 1205.0,382.0 C1207.4,382.5 1209.8,369.6 1212.2,369.6 C1214.5,369.5 1216.9,381.9 1219.3,381.7 C1221.6,381.4 1224.0,369.2 1226.4,368.0 C1228.7,366.9 1231.1,374.8 1233.5,374.8 C1235.8,374.9 1238.2,366.6 1240.6,368.2 C1242.9,369.8 1245.3,384.3 1247.7,384.6 C1250.0,385.0 1252.4,370.9 1254.8,370.3 C1257.1,369.6 1259.5,380.5 1261.9,380.6 C1264.2,380.6 1266.6,370.8 1269.0,370.7 C1271.3,370.5 1273.7,380.3 1276.1,379.8 C1278.4,379.3 1280.8,367.5 1283.2,367.7 C1285.5,367.8 1287.9,380.2 1290.3,380.4 C1292.6,380.7 1295.0,368.4 1297.4,369.0 C1299.7,369.7 1302.1,384.3 1304.5,384.4 C1306.8,384.4 1309.2,370.1 1311.6,369.3 C1313.9,368.5 1316.3,379.6 1318.7,379.9 C1321.0,380.1 1323.4,370.0 1325.8,370.8 C1328.1,371.6 1330.5,385.2 1332.9,384.7 C1335.2,384.2 1337.6,368.0 1340.0,367.9 C1342.3,367.8 1344.7,384.1 1347.1,384.0 C1349.4,383.9 1351.8,368.1 1354.2,367.6 C1356.5,367.1 1358.9,380.3 1361.3,381.0 C1363.6,381.7 1366.0,373.2 1368.4,371.9 C1370.7,370.5 1373.1,373.7 1375.5,373.0 C1377.8,372.3 1380.2,366.3 1382.6,367.6 C1384.9,369.0 1387.3,380.9 1389.7,381.0 C1392.0,381.1 1394.4,367.4 1396.8,368.1 C1399.1,368.7 1401.5,384.5 1403.9,384.9 C1406.2,385.4 1408.6,371.5 1411.0,370.8 C1413.3,370.1 1415.7,380.8 1418.1,380.6 C1420.5,380.4 1422.8,370.4 1425.2,369.7 C1427.6,368.9 1429.9,375.9 1432.3,376.0 C1434.7,376.1 1437.0,369.7 1439.4,370.5 C1441.8,371.2 1444.1,380.5 1446.5,380.6 C1448.9,380.6 1451.2,370.1 1453.6,370.5 C1456.0,371.0 1458.3,384.1 1460.7,383.2 C1463.1,382.3 1465.4,365.6 1467.8,365.3 C1470.2,365.1 1472.5,380.7 1474.9,381.6 C1477.3,382.4 1479.6,370.3 1482.0,370.6 C1484.4,371.0 1486.7,383.9 1489.1,383.8 C1491.5,383.7 1493.8,370.1 1496.2,370.1 C1498.6,370.2 1500.9,384.7 1503.3,384.2 C1505.7,383.7 1508.0,367.0 1510.4,367.0 C1512.8,367.1 1515.1,384.8 1517.5,384.6 C1519.9,384.4 1523.4,368.9 1524.6,365.8" fill="none" stroke="#4159a8" stroke-width="2.3"/>
<circle cx="191.8" cy="512.2" r="6.3" fill="#5b4aaa"/>
<text x="210.0" y="518.1" font-size="16.8" fill="#0f3234" font-weight="bold" text-anchor="start" >ACME Book Store ...</text>
<rect x="425.3" y="506.50000000000006" width="11.4" height="11.4" fill="#5aa6f5"/>
<text x="449.2" y="518.1" font-size="16.8" fill="#0f3234" font-weight="bold" text-anchor="start" >ECommerce Server...</text>
<path d="M670.2,505.40000000000003 L677.0,512.2 L670.2,519.0 L663.4000000000001,512.2 Z" fill="#8fdab8"/>
<text x="688.4" y="518.1" font-size="16.8" fill="#0f3234" font-weight="bold" text-anchor="start" >ECommerce Server...</text>
<path d="M909.3999999999999,505.40000000000003 L916.4999999999998,518.0 L902.3,518.0 Z" fill="#f8b64c"/>
<text x="927.6" y="518.1" font-size="16.8" fill="#0f3234" font-weight="bold" text-anchor="start" >ECommerce Server...</text>
<path d="M1141.5,506.40000000000003 L1155.6999999999998,506.40000000000003 L1148.6,519.0 Z" fill="#f2708c"/>
<text x="1166.8" y="518.1" font-size="16.8" fill="#0f3234" font-weight="bold" text-anchor="start" >ECommerce Server...</text>
<path d="M191.8,540.5 L198.1,545.1 L195.7,552.5 L187.9,552.5 L185.5,545.1 Z" fill="#957efb"/>
<text x="210" y="552.4" font-size="16.8" fill="#0f3234" font-weight="bold" text-anchor="start" >ECommerce Server...</text>
<text x="205.3" y="845.3" font-size="25.5" fill="#262a31" stroke="#262a31" stroke-width="0.8" text-anchor="start" >Label Text</text>
<rect x="112" y="939" width="495" height="1" fill="#e6e7ea"/>
<rect x="508" y="630.2" width="301" height="292.5" fill="#ffffff"/>
<text x="537" y="682.9" font-size="17.45" fill="#2b2f36" stroke="#2b2f36" stroke-width="0.63" text-anchor="start" >ENTER WIDGET TITLE</text>
<circle cx="657.8" cy="806.2" r="75.2" fill="#00d36e"/>
<rect x="947.2" y="630.2" width="283.4" height="260.8" fill="#ffffff"/>
<text x="977.5" y="682.4" font-size="17.45" fill="#2b2f36" stroke="#2b2f36" stroke-width="0.63" text-anchor="start" >ENTER WIDGET TITLE</text>
<text x="978.5" y="733.3" font-size="17.9" fill="#6b6f77" stroke="#6b6f77" stroke-width="0.3" text-anchor="start" >Calls per Minute</text>
<text x="978.9" y="785.9" font-size="37.3" fill="#50545d" stroke="#50545d" stroke-width="0.8" text-anchor="start" >308</text>
<path d="M989.9,809.5 L989.9,824.5 M982.5,817.5 L989.9,825 L997.3,817.5" fill="none" stroke="#3ccb6a" stroke-width="2"/>
<text x="1008.4" y="824.3" font-size="18.25" fill="#3db34c" stroke="#3db34c" stroke-width="0.3" text-anchor="start" >2% Change</text>
<g clip-path="url(#c2)"><rect x="1306.5" y="615" width="700" height="600" fill="#79fff6" stroke="#8e9e9e" stroke-width="1.5" filter="url(#sh)"/></g>
<text x="1313.2" y="651.5" font-size="17.9" fill="#7e5b32" stroke="#7e5b32" stroke-width="0.64" text-anchor="start" >MY TITLE</text>
<circle cx="1952.6" cy="644.6" r="13.2" fill="none" stroke="#2e5052" stroke-width="2.8"/>
<path d="M1951.4,635.9 L1951.4,645.7 L1958.8,650.1" fill="none" stroke="#2e5052" stroke-width="2.6"/>
<text x="1379.5" y="744.5" font-size="14.5" fill="#4e7777" font-weight="normal" text-anchor="end" >400</text>
<text x="1379.5" y="820.5" font-size="14.5" fill="#4e7777" font-weight="normal" text-anchor="end" >300</text>
<text x="1379.5" y="895.6" font-size="14.5" fill="#4e7777" font-weight="normal" text-anchor="end" >200</text>
<text x="1379.5" y="970" font-size="14.5" fill="#4e7777" font-weight="normal" text-anchor="end" >100</text>
<text x="1379.5" y="1045.3" font-size="14.5" fill="#4e7777" font-weight="normal" text-anchor="end" >0</text>
<rect x="1401" y="889.3" width="600" height="2" fill="#d3e6e4"/>
<rect x="1401" y="963.7" width="600" height="2" fill="#d3e6e4"/>
<text transform="translate(1348,861) rotate(-90)" font-size="16.6" fill="#4e7777" text-anchor="middle">title vertical</text>
<rect x="1406.1" y="1039" width="1" height="13" fill="#bfe3ea"/>
<text x="1406.6" y="1064.1" font-size="14.5" fill="#4e7777" font-weight="normal" text-anchor="middle" >16:46</text>
<rect x="1507.6" y="1039" width="1" height="13" fill="#bfe3ea"/>
<text x="1508.1" y="1064.1" font-size="14.5" fill="#4e7777" font-weight="normal" text-anchor="middle" >16:48</text>
<rect x="1609.1" y="1039" width="1" height="13" fill="#bfe3ea"/>
<text x="1609.6" y="1064.1" font-size="14.5" fill="#4e7777" font-weight="normal" text-anchor="middle" >16:50</text>
<rect x="1710.6" y="1039" width="1" height="13" fill="#bfe3ea"/>
<text x="1711.1" y="1064.1" font-size="14.5" fill="#4e7777" font-weight="normal" text-anchor="middle" >16:52</text>
<rect x="1812.1" y="1039" width="1" height="13" fill="#bfe3ea"/>
<text x="1812.6" y="1064.1" font-size="14.5" fill="#4e7777" font-weight="normal" text-anchor="middle" >16:54</text>
<rect x="1913.6" y="1039" width="1" height="13" fill="#bfe3ea"/>
<text x="1914.1" y="1064.1" font-size="14.5" fill="#4e7777" font-weight="normal" text-anchor="middle" >16:56</text>
<rect x="1407" y="1037.5" width="600" height="2.2" fill="#c9c8f4"/>
<text x="1762.3" y="1089.7" font-size="16.6" fill="#4e7777" font-weight="normal" text-anchor="middle" >title horizontal</text>
<path d="M1406.6,978.6 C1415.1,979.6 1440.4,984.8 1457.3,984.6 C1474.3,984.5 1491.2,978.2 1508.1,977.7 C1525.0,977.2 1541.9,982.0 1558.8,981.4 C1575.8,980.9 1592.7,973.0 1609.6,974.5 C1626.5,976.0 1643.4,991.0 1660.3,990.6 C1677.3,990.3 1694.2,972.4 1711.1,972.4 C1728.0,972.4 1744.9,989.8 1761.8,990.6 C1778.8,991.5 1795.7,978.2 1812.6,977.7 C1829.5,977.2 1846.4,988.5 1863.3,987.4 C1880.3,986.4 1897.2,972.5 1914.1,971.3 C1931.0,970.1 1947.9,978.1 1964.8,980.3 C1981.8,982.5 2007.1,983.9 2015.6,984.6" fill="none" stroke="#f3c5d2" stroke-width="2"/>
<path d="M1406.6,985.9 C1415.1,983.9 1440.4,973.2 1457.3,973.8 C1474.3,974.3 1491.2,989.1 1508.1,989.1 C1525.0,989.1 1541.9,974.8 1558.8,973.8 C1575.8,972.8 1592.7,983.1 1609.6,983.1 C1626.5,983.1 1643.4,972.8 1660.3,973.8 C1677.3,974.8 1694.2,989.1 1711.1,989.1 C1728.0,989.1 1744.9,974.3 1761.8,973.8 C1778.8,973.2 1795.7,985.6 1812.6,985.9 C1829.5,986.2 1846.4,977.8 1863.3,975.6 C1880.3,973.4 1897.2,971.6 1914.1,972.8 C1931.0,974.1 1947.9,982.7 1964.8,983.1 C1981.8,983.6 2007.1,976.9 2015.6,975.6" fill="none" stroke="#e9c9d6" stroke-width="1.6"/>
<path d="M1406.6,987.4 C1415.1,985.4 1440.4,974.7 1457.3,975.2 C1474.3,975.8 1491.2,990.6 1508.1,990.6 C1525.0,990.6 1541.9,976.2 1558.8,975.2 C1575.8,974.2 1592.7,984.6 1609.6,984.6 C1626.5,984.6 1643.4,974.2 1660.3,975.2 C1677.3,976.2 1694.2,990.6 1711.1,990.6 C1728.0,990.6 1744.9,975.8 1761.8,975.2 C1778.8,974.7 1795.7,987.1 1812.6,987.4 C1829.5,987.8 1846.4,979.3 1863.3,977.1 C1880.3,974.9 1897.2,973.1 1914.1,974.3 C1931.0,975.6 1947.9,984.2 1964.8,984.6 C1981.8,985.1 2007.1,978.4 2015.6,977.1" fill="none" stroke="#e46a80" stroke-width="2"/>
<path d="M1406.6,797.5 C1415.1,801.5 1440.4,822.1 1457.3,821.5 C1474.3,820.9 1491.2,795.9 1508.1,793.8 C1525.0,791.6 1541.9,810.9 1558.8,808.8 C1575.8,806.6 1592.7,774.9 1609.6,781.0 C1626.5,787.1 1643.4,846.9 1660.3,845.5 C1677.3,844.1 1694.2,772.8 1711.1,772.8 C1728.0,772.8 1744.9,842.0 1761.8,845.5 C1778.8,849.0 1795.7,795.9 1812.6,793.8 C1829.5,791.6 1846.4,837.0 1863.3,832.8 C1880.3,828.5 1897.2,773.0 1914.1,768.2 C1931.0,763.5 1947.9,795.4 1964.8,804.2 C1981.8,813.1 2007.1,818.6 2015.6,821.5" fill="none" stroke="#aaa5d8" stroke-width="2.2"/>
<path d="M1406.6,832.8 C1415.1,824.6 1440.4,781.9 1457.3,784.0 C1474.3,786.1 1491.2,845.5 1508.1,845.5 C1525.0,845.5 1541.9,788.0 1558.8,784.0 C1575.8,780.0 1592.7,821.5 1609.6,821.5 C1626.5,821.5 1643.4,780.0 1660.3,784.0 C1677.3,788.0 1694.2,845.5 1711.1,845.5 C1728.0,845.5 1744.9,786.1 1761.8,784.0 C1778.8,781.9 1795.7,831.5 1812.6,832.8 C1829.5,834.0 1846.4,800.2 1863.3,791.5 C1880.3,782.8 1897.2,775.2 1914.1,780.2 C1931.0,785.2 1947.9,819.6 1964.8,821.5 C1981.8,823.4 2007.1,796.5 2015.6,791.5" fill="none" stroke="#4a58b6" stroke-width="2.4"/>
<circle cx="1347" cy="1120" r="6.3" fill="#5b4aaa"/>
<text x="1364.7" y="1125.7" font-size="16.8" fill="#0f3234" font-weight="bold" text-anchor="start" >ACME Book Store ...</text>
<rect x="1580.3" y="1114.3" width="11.4" height="11.4" fill="#ab9bd8"/>
<text x="1603.7" y="1125.7" font-size="16.8" fill="#0f3234" font-weight="bold" text-anchor="start" >ACME Book Store ...</text>
<path d="M1825,1113.2 L1831.8,1120 L1825,1126.8 L1818.2,1120 Z" fill="#5aa6f5"/>
<text x="1842.7" y="1125.7" font-size="16.8" fill="#0f3234" font-weight="bold" text-anchor="start" >ECommerce Server...</text>
<path d="M1347,1147.9 L1354.1,1160.5 L1339.9,1160.5 Z" fill="#9fe3c4"/>
<text x="1364.7" y="1160.4" font-size="16.8" fill="#0f3234" font-weight="bold" text-anchor="start" >ECommerce Server...</text>
<path d="M1578.9,1148.9 L1593.1,1148.9 L1586,1161.5 Z" fill="#f8b64c"/>
<text x="1603.7" y="1160.4" font-size="16.8" fill="#0f3234" font-weight="bold" text-anchor="start" >ECommerce Server...</text>
<path d="M1825.0,1148.7 L1831.3,1153.3 L1828.9,1160.7 L1821.1,1160.7 L1818.7,1153.3 Z" fill="#f2708c"/>
<text x="1842.7" y="1160.4" font-size="16.8" fill="#0f3234" font-weight="bold" text-anchor="start" >ECommerce Server...</text>
<path d="M1330.7,1196 L1337.2,1184 L1343.6,1196 Z" fill="#c9cccc"/>
<text x="1350.4" y="1197" font-size="16.5" fill="#1d3a3c" font-weight="normal" text-anchor="start" >1/2</text>
<path d="M1378.4,1184 L1393.7,1184 L1386,1197 Z" fill="#0b2c9c"/>
<rect x="1300" y="1195.6" width="672" height="26" fill="#f2f3f5"/>
<rect x="47.4" y="1221.3" width="1925" height="263" fill="#ffffff"/>
<rect x="47.4" y="1221" width="1925" height="1.2" fill="#e2e4e8"/>
<rect x="46.8" y="1221" width="1.2" height="263" fill="#e2e4e8"/>
<rect x="77.8" y="1221" width="562.2" height="8.6" fill="#f2f3f5"/>
<text x="70.8" y="1257.9" font-size="22.45" fill="#2a2e36" stroke="#2a2e36" stroke-width="0.8" text-anchor="start" >Dashboard Variables</text>
<rect x="47.4" y="1273.6" width="1925" height="1.5" fill="#e4e6ea"/>
<text x="65.2" y="1308.5" font-size="17.9" fill="#30343b" stroke="#30343b" stroke-width="0.64" text-anchor="start" >Variable Name</text>
<text x="339.8" y="1308.4" font-size="17.9" fill="#30343b" stroke="#30343b" stroke-width="0.64" text-anchor="start" >Type</text>
<text x="614.6" y="1308.8" font-size="17.9" fill="#30343b" stroke="#30343b" stroke-width="0.64" text-anchor="start" >Initial Values</text>
<rect x="64.3" y="1319.3" width="258.09999999999997" height="39.40000000000009" fill="#f8fafd"/>
<rect x="64.3" y="1356.7" width="258.09999999999997" height="2" fill="#e1e4e8"/>
<rect x="339.3" y="1319.3" width="257.90000000000003" height="39.40000000000009" fill="#f8fafd"/>
<rect x="339.3" y="1356.7" width="257.90000000000003" height="2" fill="#e1e4e8"/>
<rect x="613.8" y="1319.3" width="326.6" height="39.40000000000009" fill="#f8fafd"/>
<rect x="613.8" y="1356.7" width="326.6" height="2" fill="#e1e4e8"/>
<rect x="901.0" y="1319.3" width="1.2" height="37.40000000000009" fill="#dfe2e6"/>
<text x="76" y="1344.4" font-size="17.8" fill="#3a3e45" stroke="#3a3e45" stroke-width="0.3" text-anchor="start" >Variable 1</text>
<text x="350.7" y="1344.7" font-size="17.8" fill="#3a3e45" stroke="#3a3e45" stroke-width="0.3" text-anchor="start" >Applications</text>
<text x="624.7" y="1345.9" font-size="17.9" fill="#3a3e45" stroke="#3a3e45" stroke-width="0.3" text-anchor="start" >ACME Book Store Applicat...</text>
<path d="M571.7,1336 L584.7,1336 L578.2,1343 Z" fill="#4c5058"/>
<path d="M914.4,1335.8 L927.6,1335.8 L921.0,1342.8 Z" fill="#4c5058"/>
<path d="M877.5,1331.8 L891.5,1345.8 M891.5,1331.8 L877.5,1345.8" stroke="#4c5058" stroke-width="2"/>
<rect x="977.8" y="1325.3" width="22" height="2.6" rx="0.8" fill="#50555e"/>
<path d="M984.3,1325.5 Q984.3,1322.3 988.8,1322.3 Q993.3,1322.3 993.3,1325.5 Z" fill="#50555e"/>
<path d="M979.0,1329.8 L998.5999999999999,1329.8 L997.0,1347.8 Q996.8,1349.8 994.8,1349.8 L982.8,1349.8 Q980.8,1349.8 980.5999999999999,1347.8 Z" fill="#50555e"/>
<rect x="1032.4" y="1327.5" width="22.5" height="22.5" rx="2" fill="#fff" stroke="#8f939a" stroke-width="2"/>
<path d="M1036.4,1339.5 L1041.4,1345.0 L1050.9,1332.5" fill="none" stroke="#2d7be5" stroke-width="2"/>
<text x="1067.5" y="1345.6" font-size="17.87" fill="#3a3e45" stroke="#3a3e45" stroke-width="0.3" text-anchor="start" >Show in View Mode</text>
<text x="65.2" y="1393.8" font-size="17.9" fill="#30343b" stroke="#30343b" stroke-width="0.64" text-anchor="start" >Variable Name</text>
<text x="339.8" y="1393.8" font-size="17.9" fill="#30343b" stroke="#30343b" stroke-width="0.64" text-anchor="start" >Type</text>
<text x="661.3" y="1394.6" font-size="17.9" fill="#30343b" stroke="#30343b" stroke-width="0.64" text-anchor="start" >Application</text>
<text x="1004.6" y="1393.7" font-size="17.9" fill="#30343b" stroke="#30343b" stroke-width="0.64" text-anchor="start" >Initial Values</text>
<rect x="64.3" y="1403.8" width="258.09999999999997" height="40.0" fill="#f8fafd"/>
<rect x="64.3" y="1441.8" width="258.09999999999997" height="2" fill="#e1e4e8"/>
<rect x="339.3" y="1403.8" width="257.90000000000003" height="40.0" fill="#f8fafd"/>
<rect x="339.3" y="1441.8" width="257.90000000000003" height="2" fill="#e1e4e8"/>
<rect x="660.9" y="1403.8" width="326.1" height="40.0" fill="#f8fafd"/>
<rect x="660.9" y="1441.8" width="326.1" height="2" fill="#e1e4e8"/>
<rect x="947.9" y="1403.8" width="1.2" height="38.0" fill="#dfe2e6"/>
<rect x="1003.6" y="1403.8" width="326.6" height="40.0" fill="#f8fafd"/>
<rect x="1003.6" y="1441.8" width="326.6" height="2" fill="#e1e4e8"/>
<rect x="1291.0" y="1403.8" width="1.2" height="38.0" fill="#dfe2e6"/>
<text x="76" y="1429" font-size="17.8" fill="#3a3e45" stroke="#3a3e45" stroke-width="0.3" text-anchor="start" >Variable 2</text>
<text x="350.7" y="1429.1" font-size="17.8" fill="#3a3e45" stroke="#3a3e45" stroke-width="0.3" text-anchor="start" >Business Transactions</text>
<text x="630.8" y="1429.7" font-size="17.8" fill="#3a3e45" stroke="#3a3e45" stroke-width="0.3" text-anchor="start" >in</text>
<text x="672" y="1431.1" font-size="17.9" fill="#3a3e45" stroke="#3a3e45" stroke-width="0.3" text-anchor="start" >ACME Book Store Applicat...</text>
<text x="1015.2" y="1429.8" font-size="17.8" fill="#3a3e45" stroke="#3a3e45" stroke-width="0.3" text-anchor="start" >ViewItems.getAllItems</text>
<path d="M571.7,1421 L584.7,1421 L578.2,1428 Z" fill="#4c5058"/>
<path d="M961.5,1420.5 L974.2,1420.5 L967.85,1427.5 Z" fill="#4c5058"/>
<path d="M1304.8,1420.8 L1318,1420.8 L1311.4,1427.8 Z" fill="#4c5058"/>
<path d="M924,1417.2 L938,1431.2 M938,1417.2 L924,1431.2" stroke="#4c5058" stroke-width="2"/>
<path d="M1267.3,1417.2 L1281.3,1431.2 M1281.3,1417.2 L1267.3,1431.2" stroke="#4c5058" stroke-width="2"/>
<rect x="1367.6" y="1413" width="22" height="2.6" rx="0.8" fill="#50555e"/>
<path d="M1374.1,1413.2 Q1374.1,1410 1378.6,1410 Q1383.1,1410 1383.1,1413.2 Z" fill="#50555e"/>
<path d="M1368.8,1417.5 L1388.3999999999999,1417.5 L1386.8,1435.5 Q1386.6,1437.5 1384.6,1437.5 L1372.6,1437.5 Q1370.6,1437.5 1370.3999999999999,1435.5 Z" fill="#50555e"/>
<rect x="1422.1" y="1415" width="22.5" height="22.5" rx="2" fill="#fff" stroke="#8f939a" stroke-width="2"/>
<path d="M1426.1,1427 L1431.1,1432.5 L1440.6,1420" fill="none" stroke="#2d7be5" stroke-width="2"/>
<text x="1457.1" y="1433.2" font-size="17.87" fill="#3a3e45" stroke="#3a3e45" stroke-width="0.3" text-anchor="start" >Show in View Mode</text>
<path d="M1675.3,1414.2 L1675.3,1433.2 M1665.8,1423.7 L1684.8,1423.7" stroke="#3a3e46" stroke-width="2.4"/>
<text x="1697.5" y="1432" font-size="18.4" fill="#2a2e36" font-weight="bold" text-anchor="start" >Add Variable</text>
</svg>
</body></html>
